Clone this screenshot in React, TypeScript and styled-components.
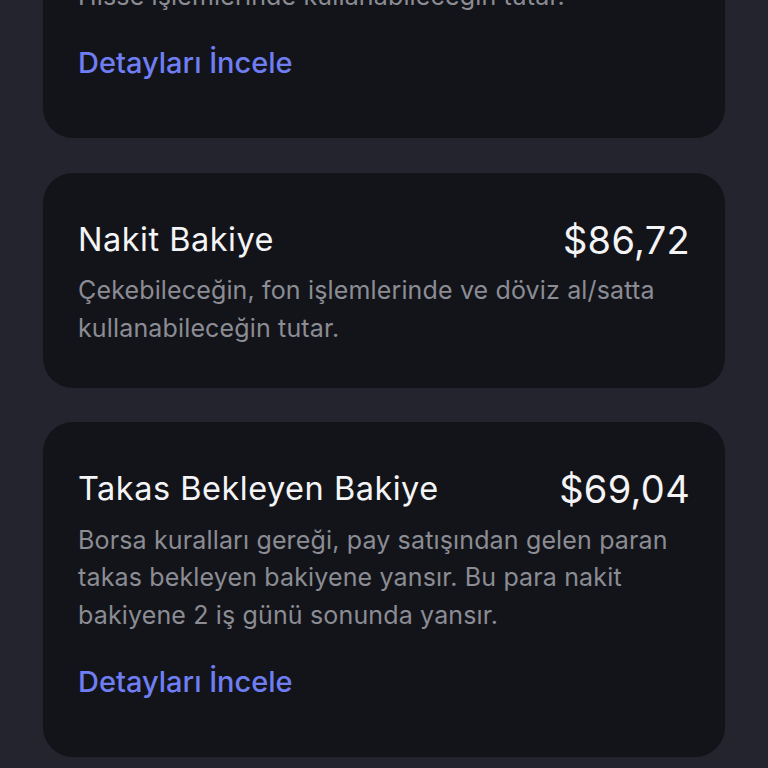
import React from "react";
import styled, { createGlobalStyle } from "styled-components";

const Global = createGlobalStyle`
  html, body { margin: 0; padding: 0; background: #23242e; }
  body { font-family: Inter, "Noto Sans", sans-serif; -webkit-font-smoothing: antialiased; }
  * { box-sizing: border-box; }
`;

const Page = styled.div`
  width: 768px;
  height: 768px;
  overflow: hidden;
  background: #23242e;
`;

const List = styled.div`
  display: flex;
  flex-direction: column;
  gap: 34.5px;
  padding: 0 43px;
  margin-top: -121.5px;
`;

const Card = styled.section`
  background: #131419;
  border-radius: 30px;
  padding: 47px 35px 40.75px 35px;
  display: flex;
  flex-direction: column;
`;

const Header = styled.div`
  display: flex;
  justify-content: space-between;
  align-items: center;
  height: 40px;
`;

const Title = styled.h2`
  margin: 0;
  font-size: 32.5px;
  line-height: 40px;
  font-weight: 400;
  letter-spacing: 0.5px;
  color: #f4f4f6;
`;

const Amount = styled.span`
  font-size: 38px;
  line-height: 40px;
  font-weight: 400;
  letter-spacing: 0.3px;
  color: #f4f4f6;
`;

const Desc = styled.p`
  margin: 12.25px 0 0 0;
  font-size: 25px;
  line-height: 37.5px;
  letter-spacing: 0.15px;
  color: #8b8c94;
`;

const Link = styled.a`
  margin-top: 30px;
  margin-bottom: 16.25px;
  font-size: 29px;
  line-height: 36px;
  font-weight: 500;
  color: #6f7ef2;
  text-decoration: none;
`;

type Item = { title: string; amount: string; desc: string; link?: boolean };

const items: Item[] = [
  {
    title: "Hisse Bakiyesi",
    amount: "$155,76",
    desc: "Hisse işlemlerinde kullanabileceğin tutar.",
    link: true,
  },
  {
    title: "Nakit Bakiye",
    amount: "$86,72",
    desc: "Çekebileceğin, fon işlemlerinde ve döviz al/satta kullanabileceğin tutar.",
  },
  {
    title: "Takas Bekleyen Bakiye",
    amount: "$69,04",
    desc: "Borsa kuralları gereği, pay satışından gelen paran takas bekleyen bakiyene yansır. Bu para nakit bakiyene 2 iş günü sonunda yansır.",
    link: true,
  },
];

export default function App() {
  return (
    <Page>
      <Global />
      <List>
        {items.map((it) => (
          <Card key={it.title}>
            <Header>
              <Title>{it.title}</Title>
              <Amount>{it.amount}</Amount>
            </Header>
            <Desc>{it.desc}</Desc>
            {it.link && <Link href="#">Detayları İncele</Link>}
          </Card>
        ))}
      </List>
    </Page>
  );
}
